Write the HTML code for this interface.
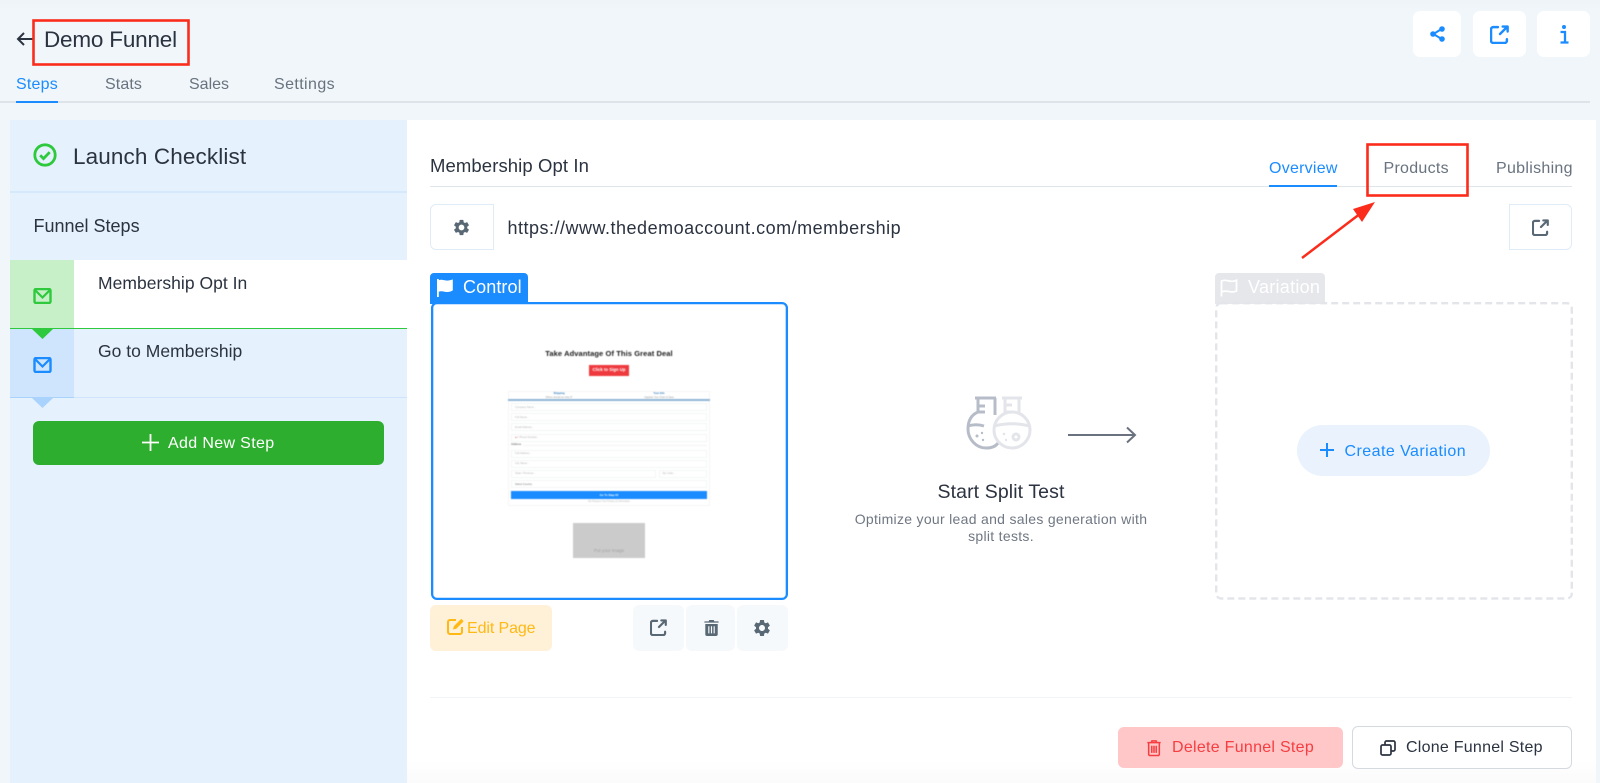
<!DOCTYPE html>
<html lang="en"><head><meta charset="utf-8"><title>Demo Funnel</title>
<style>
*{box-sizing:border-box;margin:0;padding:0}
html,body{width:1600px;height:783px;overflow:hidden;background:#f1f6fa;font-family:"Liberation Sans",sans-serif;color:#2b3340}
.a{position:absolute}
.t{position:absolute;white-space:nowrap;line-height:1}
svg{position:absolute;display:block;overflow:visible}
.btn{position:absolute;background:#fff;border-radius:7px}
.grey{color:#68737f}
.blue{color:#1a8cff}
.f{position:absolute;border:1px solid #f4f5f6;background:#fff;font-size:2.6px;color:#b5b5b5;padding:2.5px 3px;white-space:nowrap;line-height:1}
</style></head><body>
<svg width="0" height="0" style="position:absolute"><defs>
<symbol id="gear" viewBox="0 0 24 24"><path fill="currentColor" d="M19.14 12.94c.04-.3.06-.61.06-.94 0-.32-.02-.64-.07-.94l2.03-1.58a.49.49 0 0 0 .12-.61l-1.92-3.32a.488.488 0 0 0-.59-.22l-2.39.96c-.5-.38-1.03-.7-1.62-.94l-.36-2.54a.484.484 0 0 0-.48-.41h-3.84c-.24 0-.43.17-.47.41l-.36 2.54c-.59.24-1.13.57-1.62.94l-2.39-.96c-.22-.08-.47 0-.59.22L2.74 8.87c-.12.21-.08.47.12.61l2.03 1.58c-.05.3-.09.63-.09.94s.02.64.07.94l-2.03 1.58a.49.49 0 0 0-.12.61l1.92 3.32c.12.22.37.29.59.22l2.39-.96c.5.38 1.03.7 1.62.94l.36 2.54c.05.24.24.41.48.41h3.84c.24 0 .44-.17.47-.41l.36-2.54c.59-.24 1.13-.56 1.62-.94l2.39.96c.22.08.47 0 .59-.22l1.92-3.32c.12-.22.07-.47-.12-.61l-2.01-1.58zM12 15.6c-1.98 0-3.6-1.62-3.6-3.6s1.62-3.6 3.6-3.6 3.6 1.62 3.6 3.6-1.62 3.6-3.6 3.6z"/></symbol>
<symbol id="ext" viewBox="0 0 18 18"><path fill="none" stroke="currentColor" stroke-width="2.300" stroke-linecap="round" stroke-linejoin="round" d="M7.500 2H3a2 2 0 0 0-2 2v11a2 2 0 0 0 2 2h11a2 2 0 0 0 2-2v-1.500M9.500 8.500 16 2M12 1.500h4.700v4.700"/></symbol>
<symbol id="mail" viewBox="0 0 18 16"><rect x="1" y="1" width="16" height="14" rx="1.500" fill="none" stroke="currentColor" stroke-width="2.400"/><path d="M2 2.500 9 9.500 16 2.500" fill="none" stroke="currentColor" stroke-width="2.200"/></symbol>
<symbol id="trash" viewBox="0 0 16 18"><path fill="currentColor" d="M5.500 0h5l.7 1.500H15.500a.5.500 0 0 1 .5.500v1H0V2a.5.500 0 0 1 .5-.5h4.300zM1 4.500h14V16a2 2 0 0 1-2 2H3a2 2 0 0 1-2-2z"/><path stroke="#f6f9fc" stroke-width="1.300" d="M5 7v8M8 7v8M11 7v8"/></symbol>
</defs></svg>

<!-- page header -->
<div class="a" style="left:0;top:0;width:1600px;height:12px;background:linear-gradient(#eff4f8,#f1f6fa)"></div>
<svg style="left:16px;top:31px" width="18" height="16" viewBox="0 0 18 16"><path d="M17 8H2M8 2 2 8l6 6" fill="none" stroke="#2b3340" stroke-width="2"/></svg>
<div class="t" style="left:44px;top:29px;font-size:22.500px;letter-spacing:-.2px">Demo Funnel</div>
<svg style="left:32px;top:19px" width="158" height="47"><rect x="1.500" y="1.500" width="155" height="44" fill="none" stroke="#fb2c1c" stroke-width="2.600"/></svg>
<div class="t blue" style="left:16px;top:77px;font-size:16px;letter-spacing:.2px">Steps</div>
<div class="t grey" style="left:105px;top:77px;font-size:16px;letter-spacing:.1px">Stats</div>
<div class="t grey" style="left:189px;top:77px;font-size:16px">Sales</div>
<div class="t grey" style="left:274px;top:77px;font-size:16px;letter-spacing:.4px">Settings</div>
<div class="a" style="left:0;top:101px;width:1590px;height:2px;background:#dde3e9"></div>
<div class="a" style="left:16px;top:101px;width:42px;height:2px;background:#1a8cff"></div>

<div class="btn" style="left:1413px;top:11px;width:48px;height:46px"></div>
<div class="btn" style="left:1473px;top:11px;width:53px;height:46px"></div>
<div class="btn" style="left:1537px;top:11px;width:53px;height:46px"></div>
<svg class="blue" style="left:1430px;top:26px;color:#1a8cff" width="15" height="16" viewBox="0 0 15 16"><path d="M11.500 3 3.500 8l8 5" fill="none" stroke="currentColor" stroke-width="2"/><circle cx="12" cy="3" r="2.800" fill="currentColor"/><circle cx="3" cy="8" r="2.800" fill="currentColor"/><circle cx="12" cy="13" r="2.800" fill="currentColor"/></svg>
<svg style="left:1490px;top:25px;color:#1a8cff" width="19" height="19"><use href="#ext" width="19" height="19"/></svg>
<svg style="left:1558.500px;top:25px" width="11" height="19" viewBox="0 0 11 19"><circle cx="5" cy="2" r="2" fill="#1a8cff"/><path d="M1.500 7H6v10M1.500 17.500h8" fill="none" stroke="#1a8cff" stroke-width="2.300"/></svg>

<!-- sidebar -->
<div class="a" style="left:10px;top:120px;width:397px;height:663px;background:#e5f1fd"></div>
<svg style="left:33px;top:143px" width="24" height="24" viewBox="0 0 24 24"><circle cx="12" cy="12" r="10.200" fill="none" stroke="#2ec93c" stroke-width="2.800"/><path d="M7.200 12.300l3.300 3.300 6.200-6.400" fill="none" stroke="#2ec93c" stroke-width="2.800"/></svg>
<div class="t" style="left:73px;top:146px;font-size:22.500px;letter-spacing:.12px">Launch Checklist</div>
<div class="a" style="left:10px;top:191px;width:397px;height:2px;background:#d6e8fb"></div>
<div class="t" style="left:33.500px;top:217px;font-size:18px">Funnel Steps</div>

<div class="a" style="left:74px;top:260px;width:333px;height:68px;background:#fff"></div>
<div class="a" style="left:10px;top:260px;width:64px;height:68px;background:#c8f0c8"></div>
<div class="a" style="left:10px;top:329px;width:64px;height:68px;background:#cfe5fd"></div>
<div class="a" style="left:10px;top:328px;width:397px;height:1px;background:#2ec93c"></div>
<div class="a" style="left:10px;top:396.500px;width:397px;height:1.500px;background:#cfe3fa"></div>
<div class="a" style="left:10px;top:396.500px;width:64px;height:1.500px;background:#a9d3fd"></div>
<svg style="left:32px;top:329px" width="21" height="10"><path d="M0 0h21L10.500 10z" fill="#2ec93c"/></svg>
<svg style="left:32px;top:398px" width="21" height="10"><path d="M0 0h21L10.500 10z" fill="#a9d3fd"/></svg>
<svg style="left:33px;top:288px;color:#2ec93c" width="19" height="16"><use href="#mail" width="19" height="16"/></svg>
<svg style="left:33px;top:357px;color:#1a8cff" width="19" height="16"><use href="#mail" width="19" height="16"/></svg>
<div class="t" style="left:98px;top:275px;font-size:17.500px;letter-spacing:.03px">Membership Opt In</div>
<div class="t" style="left:98px;top:343px;font-size:17.500px;letter-spacing:.02px">Go to Membership</div>
<div class="a" style="left:33px;top:421px;width:351px;height:43.500px;background:#2eae2e;border-radius:6px"></div>
<svg style="left:142px;top:434px" width="17" height="17"><path d="M8.500 0v17M0 8.500h17" stroke="#fff" stroke-width="1.800"/></svg>
<div class="t" style="left:168px;top:435.500px;font-size:16px;color:#fff;letter-spacing:.35px">Add New Step</div>

<!-- main -->
<div class="a" style="left:407px;top:120px;width:1189px;height:663px;background:linear-gradient(#fff 0,#fff 640px,#fbfbfc 663px)"></div>
<div class="t" style="left:430px;top:157px;font-size:18.500px;letter-spacing:.1px">Membership Opt In</div>
<div class="a" style="left:430px;top:185.500px;width:1142px;height:1.500px;background:#dfe5ea"></div>
<div class="a" style="left:1269px;top:185px;width:68px;height:2px;background:#1a8cff"></div>
<div class="t blue" style="left:1269px;top:161px;font-size:16px;letter-spacing:.25px">Overview</div>
<div class="t grey" style="left:1383.500px;top:161px;font-size:16px;letter-spacing:.28px">Products</div>
<div class="t grey" style="left:1496px;top:161px;font-size:16px;letter-spacing:.3px">Publishing</div>
<svg style="left:1366px;top:143px" width="103" height="54"><rect x="1.500" y="1.500" width="100" height="51" fill="none" stroke="#fb2c1c" stroke-width="2.600"/></svg>
<svg style="left:1295px;top:195px" width="90" height="70" viewBox="0 0 90 70"><path d="M7 63 70 15" stroke="#fb2c1c" stroke-width="2.500"/><path d="M80 7 67 27 58 14z" fill="#fb2c1c"/></svg>

<div class="a" style="left:430px;top:204px;width:64px;height:46px;border:1.500px solid #dfecf7;border-radius:6px 0 0 6px"></div>
<svg style="left:452px;top:218px;color:#586874" width="19" height="19"><use href="#gear" width="19" height="19"/></svg>
<div class="t" style="left:507.500px;top:219px;font-size:18px;letter-spacing:.5px">https://www.thedemoaccount.com/membership</div>
<div class="a" style="left:1509px;top:204px;width:63px;height:46px;border:1.500px solid #dfecf7;border-radius:0 6px 6px 0"></div>
<svg style="left:1532px;top:219px;color:#586874" width="17" height="17"><use href="#ext" width="17" height="17"/></svg>

<!-- control -->
<div class="a" style="left:430px;top:273px;width:98px;height:31px;background:#1a8cff;border-radius:4px 4px 0 0"></div>
<svg style="left:436px;top:279px" width="18" height="18" viewBox="0 0 18 18"><path d="M1 0h1.800v1.300c3-1.300 5 .2 8 .3 2 0 4-.6 6-1.200v11c-2 1.300-4 1.700-6 1.600-3-.2-5-1.500-8-.2V18H1z" fill="#fff"/></svg>
<div class="t" style="left:463px;top:278px;font-size:18px;color:#fff;letter-spacing:.1px">Control</div>
<div class="a" style="left:431px;top:302px;width:357px;height:297.500px;border:2px solid #1a8cff;border-radius:6px;background:#fff;box-shadow:inset 0 0 0 .3px #1a8cff"></div>

<!-- thumbnail -->
<div class="a" style="left:420px;top:300px;width:380px;height:290px;filter:blur(.4px)">
  <div class="t" style="left:0;width:378px;text-align:center;top:50px;font-size:7.500px;font-weight:bold;color:#1b1b1b;letter-spacing:.1px">Take Advantage Of This Great Deal</div>
  <div class="a" style="left:169px;top:65px;width:40px;height:10.500px;background:#ee3a3e;color:#fff;font-size:4.300px;font-weight:bold;text-align:center;line-height:10.500px">Click to Sign Up</div>
  <div class="a" style="left:88px;top:91px;width:202px;height:115px;border:1px solid #f5f5f5;background:#fff"></div>
  <div class="t" style="left:88px;width:102px;top:93px;text-align:center;font-size:2.600px;font-weight:bold;color:#2d7bbd">Shipping</div>
  <div class="t" style="left:88px;width:102px;top:96.500px;text-align:center;font-size:2.400px;color:#999">Where should we ship it?</div>
  <div class="t" style="left:188px;width:102px;top:93px;text-align:center;font-size:2.600px;font-weight:bold;color:#2d7bbd">Your Info</div>
  <div class="t" style="left:188px;width:102px;top:96.500px;text-align:center;font-size:2.400px;color:#999">Upgrade Your Order &amp; Save</div>
  <div class="a" style="left:88px;top:99px;width:202px;height:2px;background:#8fb5d6"></div>
  <div class="f" style="left:91px;top:103px;width:196px;height:8px">Company Name...</div>
  <div class="f" style="left:91px;top:113px;width:196px;height:8px">Full Name...</div>
  <div class="f" style="left:91px;top:123px;width:196px;height:8px">Email Address...</div>
  <div class="f" style="left:91px;top:133.500px;width:196px;height:8px"><span style="color:#e33">●</span> ▾ Phone Number...</div>
  <div class="t" style="left:91px;top:143.500px;font-size:2.600px;font-weight:bold;color:#777">Address</div>
  <div class="a" style="left:103px;top:145px;width:184px;height:1px;background:#f3f3f3"></div>
  <div class="f" style="left:91px;top:149.500px;width:196px;height:8px">Full Address...</div>
  <div class="f" style="left:91px;top:159.500px;width:196px;height:8px">City Name...</div>
  <div class="f" style="left:91px;top:169.500px;width:145px;height:8px">State / Province...</div>
  <div class="f" style="left:238.500px;top:169.500px;width:48.500px;height:8px">Zip Code...</div>
  <div class="f" style="left:91px;top:180px;width:196px;height:8px;color:#777">Select Country</div>
  <div class="a" style="left:91px;top:190.500px;width:196px;height:8px;background:#1a8cff;color:#fff;font-size:2.800px;font-weight:bold;text-align:center;line-height:8px">Go To Step #2</div>
  <div class="t" style="left:88px;width:202px;top:200.500px;text-align:center;font-size:2.400px;color:#bbb">We Respect Your Privacy &amp; Information</div>
  <div class="a" style="left:153px;top:223px;width:72px;height:35px;background:#cbcbcb"></div>
  <div class="t" style="left:153px;width:72px;top:248.500px;text-align:center;font-size:4.500px;color:#a3a3a3">Put your image</div>
</div>

<!-- control actions -->
<div class="a" style="left:430px;top:605px;width:122px;height:46px;background:#fff0d8;border-radius:6px"></div>
<svg style="left:447px;top:618px" width="17" height="17" viewBox="0 0 17 17"><path d="M9 2H3a2 2 0 0 0-2 2v10a2 2 0 0 0 2 2h10a2 2 0 0 0 2-2V9" fill="none" stroke="#ffb914" stroke-width="2"/><path d="M6 11.500l.8-3.300L13.500 1.500a1.100 1.100 0 0 1 1.600 0l.9.9a1.100 1.100 0 0 1 0 1.600L9.300 10.700z" fill="#ffb914"/></svg>
<div class="t" style="left:467px;top:621px;font-size:16px;color:#ffb914;letter-spacing:-.1px">Edit Page</div>
<div class="a" style="left:633px;top:605px;width:50.500px;height:46px;background:#f6f9fc;border-radius:6px"></div>
<div class="a" style="left:686px;top:605px;width:49px;height:46px;background:#f6f9fc;border-radius:6px"></div>
<div class="a" style="left:737px;top:605px;width:51px;height:46px;background:#f6f9fc;border-radius:6px"></div>
<svg style="left:650px;top:619px;color:#586874" width="17" height="17"><use href="#ext" width="17" height="17"/></svg>
<svg style="left:703.500px;top:620px;color:#586874" width="15" height="16"><use href="#trash" width="15" height="16"/></svg>
<svg style="left:752px;top:618px;color:#586874" width="20" height="20"><use href="#gear" width="20" height="20"/></svg>
<div class="a" style="left:430px;top:697px;width:1142px;height:1px;background:#f1f4f8"></div>

<!-- split test -->
<svg style="left:965px;top:396px" width="68" height="56" viewBox="0 0 68 56">
  <g fill="none" stroke="#b7bdc8" stroke-width="3"><path d="M10 2H31M13 2v14C6 19 3 25 3 33c0 10 8 19 18 19 6 0 10-2 12-5M30 2V19"/><path d="M13 10h7M13 16h7"/><path d="M3 30c5-1.500 11-1.500 16 0"/></g>
  <g fill="#b7bdc8"><circle cx="12" cy="40" r="1.500"/><circle cx="17" cy="37" r="1.200"/><circle cx="18" cy="44" r="1.200"/></g>
  <g fill="none" stroke="#e3e5ea" stroke-width="3"><circle cx="47" cy="34" r="18" fill="#fff"/><path d="M37 2H57M40 2v15M54 2v15M40 9h7M40 16h7"/><path d="M29 30c12-3 24-3 36 0"/><circle cx="51" cy="41" r="3"/></g>
  <g fill="#e3e5ea"><circle cx="39" cy="38" r="1.300"/><circle cx="41" cy="44" r="1.200"/></g>
</svg>
<svg style="left:1068px;top:426px" width="69" height="18" viewBox="0 0 69 18"><path d="M0 9h67M59 1.500 67 9l-8 7.500" fill="none" stroke="#6a7280" stroke-width="2"/></svg>
<div class="t" style="left:801px;width:400px;text-align:center;top:482.500px;font-size:19.500px;letter-spacing:.1px">Start Split Test</div>
<div class="t" style="left:801px;width:400px;text-align:center;top:512px;font-size:14px;color:#6f7783;letter-spacing:.3px">Optimize your lead and sales generation with</div>
<div class="t" style="left:801px;width:400px;text-align:center;top:529px;font-size:14px;color:#6f7783;letter-spacing:.3px">split tests.</div>

<!-- variation -->
<div class="a" style="left:1215px;top:273px;width:110px;height:31px;background:#e5e7eb;border-radius:4px 4px 0 0"></div>
<svg style="left:1220px;top:279px" width="18" height="18" viewBox="0 0 18 18"><path d="M1.500 17.500V2c3-1.500 5-.5 7.500 0s5 .5 7.500-.8V12c-2.500 1.200-5 1.200-7.500.6S4 11.500 1.500 13" fill="none" stroke="#fff" stroke-width="1.700"/></svg>
<div class="t" style="left:1248px;top:278px;font-size:18px;color:#fff;letter-spacing:.28px">Variation</div>
<svg style="left:1215px;top:302px" width="358" height="298"><rect x="1.200" y="1.200" width="355.600" height="295.300" rx="5" fill="none" stroke="#e3e5ea" stroke-width="2.400" stroke-dasharray="7 4"/></svg>
<div class="a" style="left:1297px;top:425px;width:193px;height:51px;background:#e9f2fd;border-radius:26px"></div>
<svg style="left:1320px;top:443px" width="14" height="14"><path d="M7 0v14M0 7h14" stroke="#1a8cff" stroke-width="2"/></svg>
<div class="t blue" style="left:1344.500px;top:443.500px;font-size:16px;letter-spacing:.45px">Create Variation</div>

<!-- footer buttons -->
<div class="a" style="left:1118px;top:727px;width:225px;height:41px;background:#ffc7c7;border-radius:6px"></div>
<svg style="left:1146px;top:740px" width="16" height="16" viewBox="0 0 16 18"><path fill="none" stroke="#f63e42" stroke-width="1.700" d="M5 2.500 5.700 1h4.600l.7 1.500M.5 3h15M2 3v13a1.500 1.500 0 0 0 1.500 1.500h9A1.500 1.500 0 0 0 14 16V3M5.500 6.500v8M8 6.500v8M10.500 6.500v8"/></svg>
<div class="t" style="left:1172px;top:740px;font-size:16px;color:#f63e42;letter-spacing:.28px">Delete Funnel Step</div>
<div class="a" style="left:1352px;top:726px;width:220px;height:43px;background:#fff;border:1.500px solid #d5d9e0;border-radius:6px"></div>
<svg style="left:1380px;top:740px" width="16" height="16" viewBox="0 0 16 16"><rect x="1" y="5" width="10" height="10" rx="1.500" fill="#fff" stroke="#2b3340" stroke-width="1.700"/><path d="M5 5V2.500A1.500 1.500 0 0 1 6.500 1h7A1.500 1.500 0 0 1 15 2.500v7a1.500 1.500 0 0 1-1.500 1.500H11" fill="none" stroke="#2b3340" stroke-width="1.700"/></svg>
<div class="t" style="left:1406px;top:740px;font-size:16px;letter-spacing:.25px">Clone Funnel Step</div>
</body></html>
